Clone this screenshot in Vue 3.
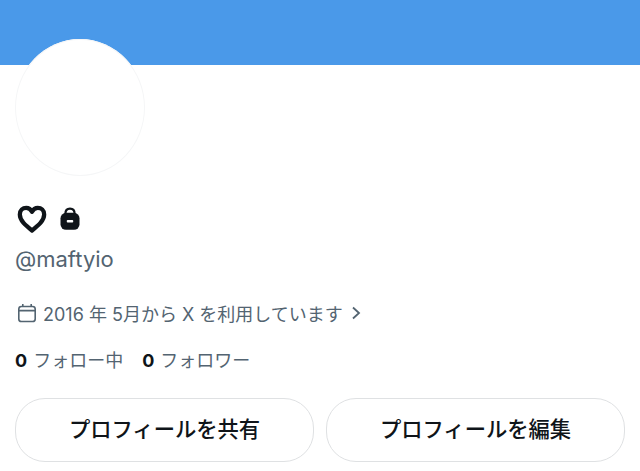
<script setup>
const stats = [
  { n: '0', label: 'フォロー中' },
  { n: '0', label: 'フォロワー' }
]
const buttons = ['プロフィールを共有', 'プロフィールを編集']
</script>

<template>
  <div class="page">
    <div class="banner"></div>
    <div class="content">
      <div class="avatar"></div>
      <div class="name-row">
        <svg class="heart" width="32" height="30" viewBox="0 0 30 28">
          <path d="M15 24.8 C9 20 3.6 15.6 3.6 9.8 C3.6 5.9 6.4 3.6 9.6 3.6 C11.9 3.6 13.8 4.9 15 7.2 C16.2 4.9 18.1 3.6 20.4 3.6 C23.6 3.6 26.4 5.9 26.4 9.8 C26.4 15.6 21 20 15 24.8 Z" fill="none" stroke="#0f1419" stroke-width="4" stroke-linejoin="round"/>
        </svg>
        <svg class="lock" width="20" height="24" viewBox="0 0 20 24">
          <path d="M5.4 9 V6.6 C5.4 3.6 7.2 1.6 10 1.6 C12.8 1.6 14.6 3.6 14.6 6.6 V9" fill="none" stroke="#0f1419" stroke-width="2.2"/>
          <rect x="0.5" y="5.8" width="19" height="17" rx="5.5" fill="#0f1419"/>
          <rect x="6.8" y="13" width="6.4" height="2.6" rx="0.8" fill="#fff"/>
        </svg>
      </div>
      <div class="handle">@maftyio</div>
      <div class="joined">
        <svg class="cal" width="20" height="20" viewBox="0 0 20 20" fill="none" stroke="#536471" stroke-width="1.6">
          <rect x="1.8" y="3.5" width="16.4" height="15" rx="2.6"/>
          <path d="M1.8 7.6 H18.2 M5.8 1 V3.5 M14.2 1 V3.5"/>
        </svg>
        <span class="joined-text">2016 年 5月から X を利用しています</span>
        <svg class="chev" width="10" height="14" viewBox="0 0 10 14" fill="none" stroke="#536471" stroke-width="1.8">
          <path d="M2 1.5 L8 7 L2 12.5"/>
        </svg>
      </div>
      <div class="stats">
        <span v-for="s in stats" :key="s.label" class="stat">
          <b>{{ s.n }}</b>
          <span>{{ s.label }}</span>
        </span>
      </div>
      <div class="actions">
        <button v-for="b in buttons" :key="b" class="btn">{{ b }}</button>
      </div>
    </div>
  </div>
</template>

<style>
html, body { margin: 0; background: #fff; }
</style>

<style scoped>
.page {
  width: 640px;
  height: 471px;
  overflow: hidden;
  background: #fff;
  font-family: "Inter", "Noto Sans CJK JP", sans-serif;
}
.banner {
  height: 65px;
  background: #4a99e9;
}
.content {
  padding: 0 15px;
}
.avatar {
  width: 130px;
  height: 137px;
  margin-top: -26px;
  border-radius: 50%;
  background: #fff;
  box-shadow: inset 0 0 0 1px #f5f6f7;
}
.name-row {
  display: flex;
  align-items: center;
  gap: 12px;
  margin-top: 28px;
  height: 30px;
  padding-left: 1px;
}
.handle {
  margin-top: 11px;
  font-size: 22px;
  line-height: 28px;
  color: #536471;
}
.joined {
  display: flex;
  align-items: center;
  margin-top: 28px;
  height: 24px;
  color: #536471;
  font-size: 18px;
}
.cal { margin: 0 6px 0 2px; }
.joined-text { white-space: nowrap; }
.chev { margin-left: 8px; }
.stats {
  display: flex;
  gap: 19px;
  margin-top: 22px;
  height: 24px;
  align-items: center;
  font-size: 18px;
  color: #536471;
}
.stat b {
  color: #0f1419;
  font-weight: 700;
  margin-right: 6px;
}
.actions {
  display: flex;
  gap: 12px;
  margin-top: 27px;
}
.btn {
  width: 299px;
  height: 64px;
  border: 1.5px solid #dfe1e3;
  border-radius: 30px;
  background: #fff;
  color: #0f1419;
  font-family: inherit;
  font-size: 21.3px;
  font-weight: 500;
  padding: 0 0 5px;
}
</style>
